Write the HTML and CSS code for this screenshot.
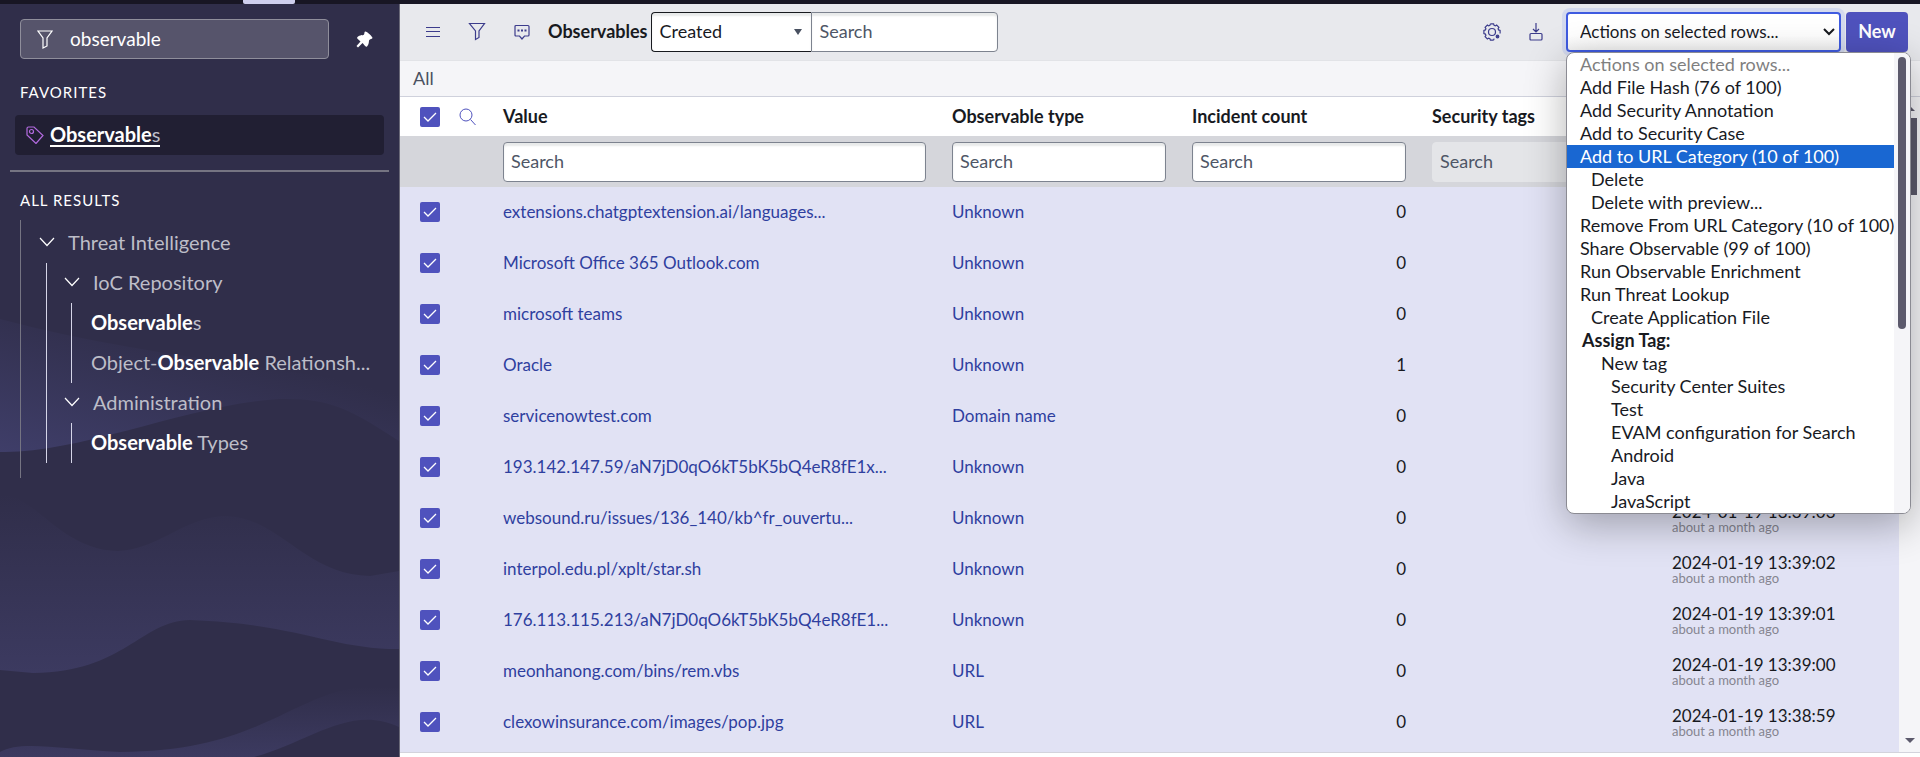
FILE: index.html
```
<!DOCTYPE html>
<html lang="en">
  <head>
    <meta charset="UTF-8" />
    <meta name="viewport" content="width=device-width, initial-scale=1.0" />
    <title>Observables</title>
    <link rel="stylesheet" href="styles.css">
  </head>
  <body>
    <div class="topbar"><span class="topbar-tab"></span></div>
    <div class="layout">
      <nav class="sidebar">
        <svg class="waves" viewBox="0 0 399 753" preserveAspectRatio="none" aria-hidden="true">
          <defs>
            <linearGradient id="w1" gradientUnits="userSpaceOnUse" x1="230" y1="345" x2="180" y2="530">
              <stop offset="0" stop-color="#302e4a" />
              <stop offset="1" stop-color="#42416f" />
            </linearGradient>
            <linearGradient id="w2" x1="0" y1="0" x2="0" y2="1">
              <stop offset="0" stop-color="#302e4a" />
              <stop offset="1" stop-color="#3c3a60" />
            </linearGradient>
          </defs>
          <path fill="url(#w1)" d="M0 315C130 350 260 360 399 385V437C350 405 330 394 280 395C190 400 80 450 0 448Z" />
          <path fill="url(#w2)" d="M0 490C35 490 60 546 118 547C160 545 185 512 227 512C280 514 305 571 370 572L399 567V645C330 645 300 620 190 616C140 617 125 668 33 669L0 666Z" />
          <path fill="url(#w2)" d="M0 748C20 736 60 745 120 748C280 748 300 670 399 684V723C350 700 310 738 254 753H0Z" />
        </svg>
        <div class="filter-row">
          <div class="filter">
            <svg width="16" height="19" viewBox="0 0 16 19" fill="none" stroke="#fff" stroke-width="1.2"><path d="M1 1H15L10 8V16L6 18V8Z" /></svg>
            <input type="text" value="observable" aria-label="Filter navigator">
          </div>
          <button class="pin" aria-label="Pin menu">
            <svg width="17" height="17" viewBox="0 0 17 17" fill="#fff"><path d="M9 0.5C10.500 -0.200 16.500 5.500 16.500 7C16 8.500 14 7.800 13.300 9C12.500 10.500 13.500 12.500 11 15.500C9.500 16.500 8 13.500 6.500 12L2 16.500L0.500 15L4.500 10.500C3 9 0 7.500 1.500 6C4 3.500 6.500 4.800 7.800 3.800C8.800 2.800 8 1.300 9 0.500Z" /></svg>
          </button>
        </div>
        <h2>FAVORITES</h2>
        <a class="favorite" href="#">
          <svg width="18" height="18" viewBox="0 0 18 18" fill="none" stroke="#b36be0" stroke-width="1.2"><path d="M1 2.500Q1 1 2.500 1H8L17 9.500L10 17.500L1 9Z" /><circle cx="5.500" cy="5.500" r="2" /></svg>
          <span class="favorite-name"><b>Observable</b>s</span>
        </a>
        <hr>
        <h2>ALL RESULTS</h2>
        <div class="tree">
          <button class="node"><svg class="chevron" viewBox="0 0 16 10"><path d="M1 1L8 8.500L15 1" /></svg>Threat Intelligence</button>
          <div class="branch">
            <button class="node"><svg class="chevron" viewBox="0 0 16 10"><path d="M1 1L8 8.500L15 1" /></svg>IoC Repository</button>
            <div class="leaves">
              <a href="#"><b>Observable</b>s</a>
              <a href="#">Object-<b>Observable</b> Relationsh...</a>
            </div>
            <button class="node"><svg class="chevron" viewBox="0 0 16 10"><path d="M1 1L8 8.500L15 1" /></svg>Administration</button>
            <div class="leaves">
              <a href="#"><b>Observable</b> Types</a>
            </div>
          </div>
        </div>
      </nav>

      <main>
        <header class="toolbar">
          <button class="icon" aria-label="Menu"><svg width="14" height="12" viewBox="0 0 14 12"><path d="M0 1.500H14M0 5.500H14M0 10.500H14" /></svg></button>
          <button class="icon" aria-label="Filter"><svg width="18" height="20" viewBox="0 0 18 20"><path d="M1.500 1.500H16.500L11 9V15.500L7.500 17.500V9Z" /></svg></button>
          <button class="icon" aria-label="Comments"><svg width="16" height="18" viewBox="0 0 16 18"><path d="M2 2.500H14Q15 2.500 15 3.500V12Q15 13 14 13H10.500L8 16L5.500 13H2Q1 13 1 12V3.500Q1 2.500 2 2.500Z" /><path stroke-width="2" d="M3.500 7.500H5.500M7 7.500H9M10.500 7.500H12.500" /></svg></button>
          <h1>Observables</h1>
          <div class="search-group">
            <select class="field" aria-label="Search column"><option>Created</option></select>
            <input class="field" type="text" placeholder="Search" aria-label="Search list">
          </div>
          <div class="tools">
            <button class="icon" aria-label="Settings"><svg width="18" height="18" viewBox="0 0 18 18"><path d="M7.400 0.900H10.600L11.100 2.400L12.300 2.900L13.600 2.100L15.900 4.400L15.100 5.700L15.600 6.900L17.100 7.400V10.600M10.600 17.100H7.400L6.900 15.600L5.700 15.100L4.400 15.900L2.100 13.600L2.900 12.300L2.400 11.100L0.900 10.600V7.400L2.400 6.900L2.900 5.700L2.100 4.400L4.400 2.100L5.700 2.900L6.900 2.400L7.400 0.900M10.600 17.100L11.100 15.600" /><circle cx="9" cy="9" r="3.500" /><circle cx="14.500" cy="13.500" r="1.300" fill="#3c3c8c" /></svg></button>
            <button class="icon" aria-label="Download"><svg width="14" height="18" viewBox="0 0 14 18"><path d="M7 0V8.500M4 6L7 9L10 6M2 10.500H12Q13 10.500 13 11.500V16Q13 17 12 17H2Q1 17 1 16V11.500Q1 10.500 2 10.500Z" /></svg></button>
          </div>
          <div class="actions">
            <select aria-label="Actions on selected rows"><option>Actions on selected rows...</option></select>
            <div class="menu">
              <ul role="listbox" aria-label="Actions">
                <li class="disabled">Actions on selected rows...</li>
                <li>Add File Hash (76 of 100)</li>
                <li>Add Security Annotation</li>
                <li>Add to Security Case</li>
                <li class="active">Add to URL Category (10 of 100)</li>
                <li class="indent-1">Delete</li>
                <li class="indent-1">Delete with preview...</li>
                <li>Remove From URL Category (10 of 100)</li>
                <li>Share Observable (99 of 100)</li>
                <li>Run Observable Enrichment</li>
                <li>Run Threat Lookup</li>
                <li class="indent-1">Create Application File</li>
                <li class="group">Assign Tag:</li>
                <li class="indent-2">New tag</li>
                <li class="indent-3">Security Center Suites</li>
                <li class="indent-3">Test</li>
                <li class="indent-3">EVAM configuration for Search</li>
                <li class="indent-3">Android</li>
                <li class="indent-3">Java</li>
                <li class="indent-3">JavaScript</li>
              </ul>
              <div class="menu-scroll"><span></span></div>
            </div>
          </div>
          <button class="new">New</button>
        </header>
        <div class="breadcrumb"><a href="#">All</a></div>

        <div class="list">
          <div class="table-wrap">
            <table>
              <colgroup>
                <col class="col-check"><col class="col-find"><col><col class="col-data"><col class="col-data"><col class="col-data"><col class="col-data">
              </colgroup>
              <thead>
                <tr>
                  <th><input type="checkbox" checked aria-label="Select all"></th>
                  <th><button class="find" aria-label="Toggle search"><svg width="17" height="18" viewBox="0 0 17 18"><circle cx="7" cy="7" r="6" /><path d="M11.500 11.500L16.500 17" /></svg></button></th>
                  <th>Value</th>
                  <th>Observable type</th>
                  <th>Incident count</th>
                  <th>Security tags</th>
                  <th></th>
                </tr>
                <tr class="search-row">
                  <td></td>
                  <td></td>
                  <td><input class="field" type="text" placeholder="Search" aria-label="Search value"></td>
                  <td><input class="field" type="text" placeholder="Search" aria-label="Search observable type"></td>
                  <td><input class="field" type="text" placeholder="Search" aria-label="Search incident count"></td>
                  <td><input class="field" type="text" placeholder="Search" aria-label="Search security tags" disabled></td>
                  <td></td>
                </tr>
              </thead>
              <tbody>
                <tr><td><input type="checkbox" checked aria-label="Select row"></td><td></td><td><a href="#">extensions.chatgptextension.ai/languages...</a></td><td><a href="#">Unknown</a></td><td class="num">0</td><td></td><td></td></tr>
                <tr><td><input type="checkbox" checked aria-label="Select row"></td><td></td><td><a href="#">Microsoft Office 365 Outlook.com</a></td><td><a href="#">Unknown</a></td><td class="num">0</td><td></td><td></td></tr>
                <tr><td><input type="checkbox" checked aria-label="Select row"></td><td></td><td><a href="#">microsoft teams</a></td><td><a href="#">Unknown</a></td><td class="num">0</td><td></td><td></td></tr>
                <tr><td><input type="checkbox" checked aria-label="Select row"></td><td></td><td><a href="#">Oracle</a></td><td><a href="#">Unknown</a></td><td class="num">1</td><td></td><td></td></tr>
                <tr><td><input type="checkbox" checked aria-label="Select row"></td><td></td><td><a href="#">servicenowtest.com</a></td><td><a href="#">Domain name</a></td><td class="num">0</td><td></td><td></td></tr>
                <tr><td><input type="checkbox" checked aria-label="Select row"></td><td></td><td><a href="#">193.142.147.59/aN7jD0qO6kT5bK5bQ4eR8fE1x...</a></td><td><a href="#">Unknown</a></td><td class="num">0</td><td></td><td></td></tr>
                <tr><td><input type="checkbox" checked aria-label="Select row"></td><td></td><td><a href="#">websound.ru/issues/136_140/kb^fr_ouvertu...</a></td><td><a href="#">Unknown</a></td><td class="num">0</td><td></td><td class="date">2024-01-19 13:39:03<small>about a month ago</small></td></tr>
                <tr><td><input type="checkbox" checked aria-label="Select row"></td><td></td><td><a href="#">interpol.edu.pl/xplt/star.sh</a></td><td><a href="#">Unknown</a></td><td class="num">0</td><td></td><td class="date">2024-01-19 13:39:02<small>about a month ago</small></td></tr>
                <tr><td><input type="checkbox" checked aria-label="Select row"></td><td></td><td><a href="#">176.113.115.213/aN7jD0qO6kT5bK5bQ4eR8fE1...</a></td><td><a href="#">Unknown</a></td><td class="num">0</td><td></td><td class="date">2024-01-19 13:39:01<small>about a month ago</small></td></tr>
                <tr><td><input type="checkbox" checked aria-label="Select row"></td><td></td><td><a href="#">meonhanong.com/bins/rem.vbs</a></td><td><a href="#">URL</a></td><td class="num">0</td><td></td><td class="date">2024-01-19 13:39:00<small>about a month ago</small></td></tr>
                <tr><td><input type="checkbox" checked aria-label="Select row"></td><td></td><td><a href="#">clexowinsurance.com/images/pop.jpg</a></td><td><a href="#">URL</a></td><td class="num">0</td><td></td><td class="date">2024-01-19 13:38:59<small>about a month ago</small></td></tr>
              </tbody>
            </table>
          </div>
          <div class="scrollbar">
            <i class="arrow up"></i>
            <span class="thumb"></span>
            <i class="arrow down"></i>
          </div>
        </div>
      </main>
    </div>
  </body>
</html>
```

FILE: styles.css
```
* {
  box-sizing: border-box;
}
body {
  margin: 0;
  height: 100vh;
  display: flex;
  flex-direction: column;
  overflow: hidden;
  font-family: Lato, "Open Sans", sans-serif;
  font-size: 18px;
  color: #181a1f;
}
button, input, select {
  font: inherit;
  color: inherit;
}
button {
  border: 0;
  padding: 0;
  background: none;
}
a {
  text-decoration: none;
}
.topbar {
  height: 4px;
  flex: none;
  background: #181624;
}
.topbar-tab {
  display: block;
  width: 52px;
  height: 4px;
  margin-left: 243px;
  background: #cfcfee;
  border-radius: 0 0 2px 2px;
}
.layout {
  flex: 1;
  min-height: 0;
  display: flex;
}

/* Navigator */
.sidebar {
  position: relative;
  z-index: 0;
  width: 400px;
  flex: none;
  padding-top: 15px;
  border-right: 1px solid #6a6978;
  background: #302e4a;
  color: #bdbdc8;
  font-size: 20px;
}
/* decoration behind the menu */
.waves {
  position: absolute;
  z-index: -1;
  inset: 0;
  width: 100%;
  height: 100%;
}
.filter-row {
  display: flex;
  align-items: center;
  gap: 27px;
  padding: 0 26px 0 20px;
}
.filter {
  flex: 1;
  min-width: 0;
  height: 40px;
  display: flex;
  align-items: center;
  gap: 17px;
  padding: 0 16px;
  border: 1px solid #8f8e9b;
  border-radius: 4px;
  background: #56546b;
}
.filter input {
  flex: 1;
  min-width: 0;
  padding: 0 0 2px;
  border: 0;
  outline: 0;
  background: none;
  color: #fff;
  font-size: 19px;
}
.pin {
  display: flex;
}
.sidebar h2 {
  margin: 23px 20px 13px;
  font-size: 15px;
  line-height: 20px;
  font-weight: 400;
  letter-spacing: 1px;
  color: #fff;
}
.favorite {
  display: flex;
  align-items: center;
  gap: 6px;
  height: 40px;
  margin: 0 15px;
  padding: 0 11px;
  border-radius: 4px;
  background: #211f33;
  color: #bdbdc8;
}
.favorite-name {
  border-bottom: 2px solid #fff;
  line-height: 22px;
}
.sidebar b {
  color: #fff;
}
.sidebar hr {
  margin: 15px 10px 0;
  border: 0;
  height: 2px;
  background: #757482;
}
.sidebar hr + h2 {
  margin: 18px 20px 10px;
}
.tree {
  margin-left: 20px;
  padding: 3px 0 15px 18px;
  border-left: 1px solid #757482;
}
.node {
  display: flex;
  align-items: center;
  gap: 13px;
  height: 40px;
  padding-bottom: 2px;
}
.chevron {
  width: 16px;
  height: 10px;
  fill: none;
  stroke: #fff;
  stroke-width: 1.2;
}
.branch {
  margin-left: 7px;
  padding-left: 17px;
  border-left: 1px solid #d5d5e8;
}
.leaves {
  margin-left: 7px;
  padding-left: 19px;
  border-left: 1px solid #d5d5e8;
}
.leaves a {
  display: block;
  padding-bottom: 2px;
  line-height: 38px;
  color: inherit;
}

/* List */
main {
  flex: 1;
  min-width: 0;
  display: flex;
  flex-direction: column;
  padding-bottom: 4px;
  background: #fff;
}
.toolbar {
  height: 56px;
  flex: none;
  display: flex;
  align-items: center;
  padding: 0 12px 0 26px;
  background: #e8e9ed;
}
.icon {
  display: flex;
  margin-right: 28px;
}
.icon svg {
  fill: none;
  stroke: #3c3c8c;
  stroke-width: 1.2;
}
.toolbar h1 {
  margin: 0 4px 0 -10px;
  padding-bottom: 2px;
  font-size: 18px;
}
.search-group {
  display: flex;
}
.field {
  width: 100%;
  height: 40px;
  padding: 0 7px 2px;
  border: 1px solid #7d838f;
  border-radius: 4px;
  background: #fff;
  box-shadow: inset 0 3px 2px #e8eaea;
}
.field::placeholder {
  color: #4e5666;
  opacity: 1;
}
.field:disabled {
  border-color: #e4e5e8;
  background: #e4e5e8;
  box-shadow: none;
}
.search-group .field {
  width: 187px;
  border-radius: 0 4px 4px 0;
}
.search-group select.field {
  width: 160px;
  appearance: none;
  border-color: #181a1f;
  border-right: 0;
  border-radius: 4px 0 0 4px;
  background: #fff url("data:image/svg+xml,%3Csvg xmlns='http://www.w3.org/2000/svg' width='8' height='6'%3E%3Cpath d='M0 0H8L4 6Z' fill='%23485060'/%3E%3C/svg%3E") no-repeat right 9px center;
}
.tools {
  display: flex;
  align-items: center;
  margin-left: auto;
}
.tools .icon:last-child {
  margin-right: 23px;
}
.actions {
  position: relative;
  margin-right: 5px;
}
.actions > select {
  display: block;
  width: 275px;
  height: 40px;
  padding: 0 12px 2px;
  appearance: none;
  border: 2px solid #3f5be0;
  border-radius: 4px;
  box-shadow: 0 0 0 4px #d3d9ee;
  font-size: 17px;
  background: url("data:image/svg+xml,%3Csvg xmlns='http://www.w3.org/2000/svg' width='12' height='8'%3E%3Cpath d='M1 1L6 6L11 1' fill='none' stroke='%23181a1f' stroke-width='2'/%3E%3C/svg%3E") no-repeat right 4px center, linear-gradient(#fff 60%, #f3f3f3);
}
.new {
  width: 62px;
  height: 40px;
  padding-bottom: 2px;
  border-radius: 4px;
  background: #4f52bd;
  color: #fff;
  font-weight: 700;
}
/* open drop-down, lies over the table */
.menu {
  position: absolute;
  z-index: 2;
  top: 100%;
  left: 0;
  display: flex;
  width: 345px;
  border: 1px solid #8b8b93;
  border-radius: 8px;
  overflow: hidden;
  background: #fff;
  box-shadow: 0 10px 40px rgba(0, 0, 0, 0.3);
}
.menu ul {
  flex: 1;
  margin: 0;
  padding: 0;
  list-style: none;
}
.menu li {
  padding-left: 13px;
  line-height: 23px;
  white-space: nowrap;
}
.menu .disabled {
  color: #7f7f7f;
}
.menu .active {
  background: #1967d2;
  color: #fff;
}
.menu .group {
  font-weight: 700;
  padding-left: 15px;
}
.menu .indent-1 {
  padding-left: 24px;
}
.menu .indent-2 {
  padding-left: 34px;
}
.menu .indent-3 {
  padding-left: 44px;
}
.menu-scroll {
  width: 16px;
  padding: 4px;
  background: #f5f5f8;
}
.menu-scroll span {
  display: block;
  height: 272px;
  border-radius: 4px;
  background: #5c5a6c;
}
.breadcrumb {
  height: 37px;
  flex: none;
  padding: 0 13px;
  line-height: 34px;
  border-top: 1px solid #e2e3e7;
  border-bottom: 1px solid #cfd1dc;
  background: #f5f5f8;
}
.breadcrumb a {
  color: #4a5060;
}
.list {
  flex: 1;
  min-height: 0;
  display: flex;
  border-bottom: 1px solid #d3d3dc;
}
.table-wrap {
  flex: 1;
  min-width: 0;
  overflow: hidden;
  background: #e1e2f4;
}
table {
  width: 100%;
  table-layout: fixed;
  border-collapse: collapse;
}
.col-check {
  width: 50px;
}
.col-find {
  width: 40px;
}
.col-data {
  width: 240px;
}
th, td {
  padding: 0 13px;
  text-align: left;
  white-space: nowrap;
}
th {
  padding-bottom: 2px;
}
th:first-child, td:first-child {
  padding: 0 0 0 20px;
}
th:nth-child(2) {
  padding: 0 9px;
}
thead tr:first-child {
  height: 39px;
  background: #fff;
}
.search-row {
  height: 51px;
  background: #d5d6db;
}
tbody tr {
  height: 51px;
  font-size: 17px;
}
tbody td, tbody td:first-child {
  padding-bottom: 2px;
}
tbody a {
  color: #2f3f9f;
}
.num {
  text-align: right;
}
.date {
  line-height: 19px;
}
.date small {
  display: block;
  font-size: 13px;
  line-height: 12px;
  color: #858590;
}
input[type="checkbox"] {
  appearance: none;
  display: block;
  width: 20px;
  height: 20px;
  margin: 0;
  border-radius: 2px;
  background: #4f52bd url("data:image/svg+xml,%3Csvg xmlns='http://www.w3.org/2000/svg' width='14' height='12'%3E%3Cpath d='M1 6L5 10L13 2' fill='none' stroke='white' stroke-width='1.3'/%3E%3C/svg%3E") no-repeat center;
}
.find {
  display: flex;
}
.find svg {
  fill: none;
  stroke: #4f52bd;
}
.scrollbar {
  width: 21px;
  display: flex;
  flex-direction: column;
  align-items: center;
  padding: 9px 0;
  background: #f5f5f8;
}
.thumb {
  width: 14px;
  height: 77px;
  margin-top: 7px;
  background: #5c5a6c;
}
.arrow {
  border: 5px solid transparent;
}
.up {
  border-top: 0;
  border-bottom-color: #5c5a6c;
}
.down {
  margin-top: auto;
  border-bottom: 0;
  border-top-color: #5c5a6c;
}
```
